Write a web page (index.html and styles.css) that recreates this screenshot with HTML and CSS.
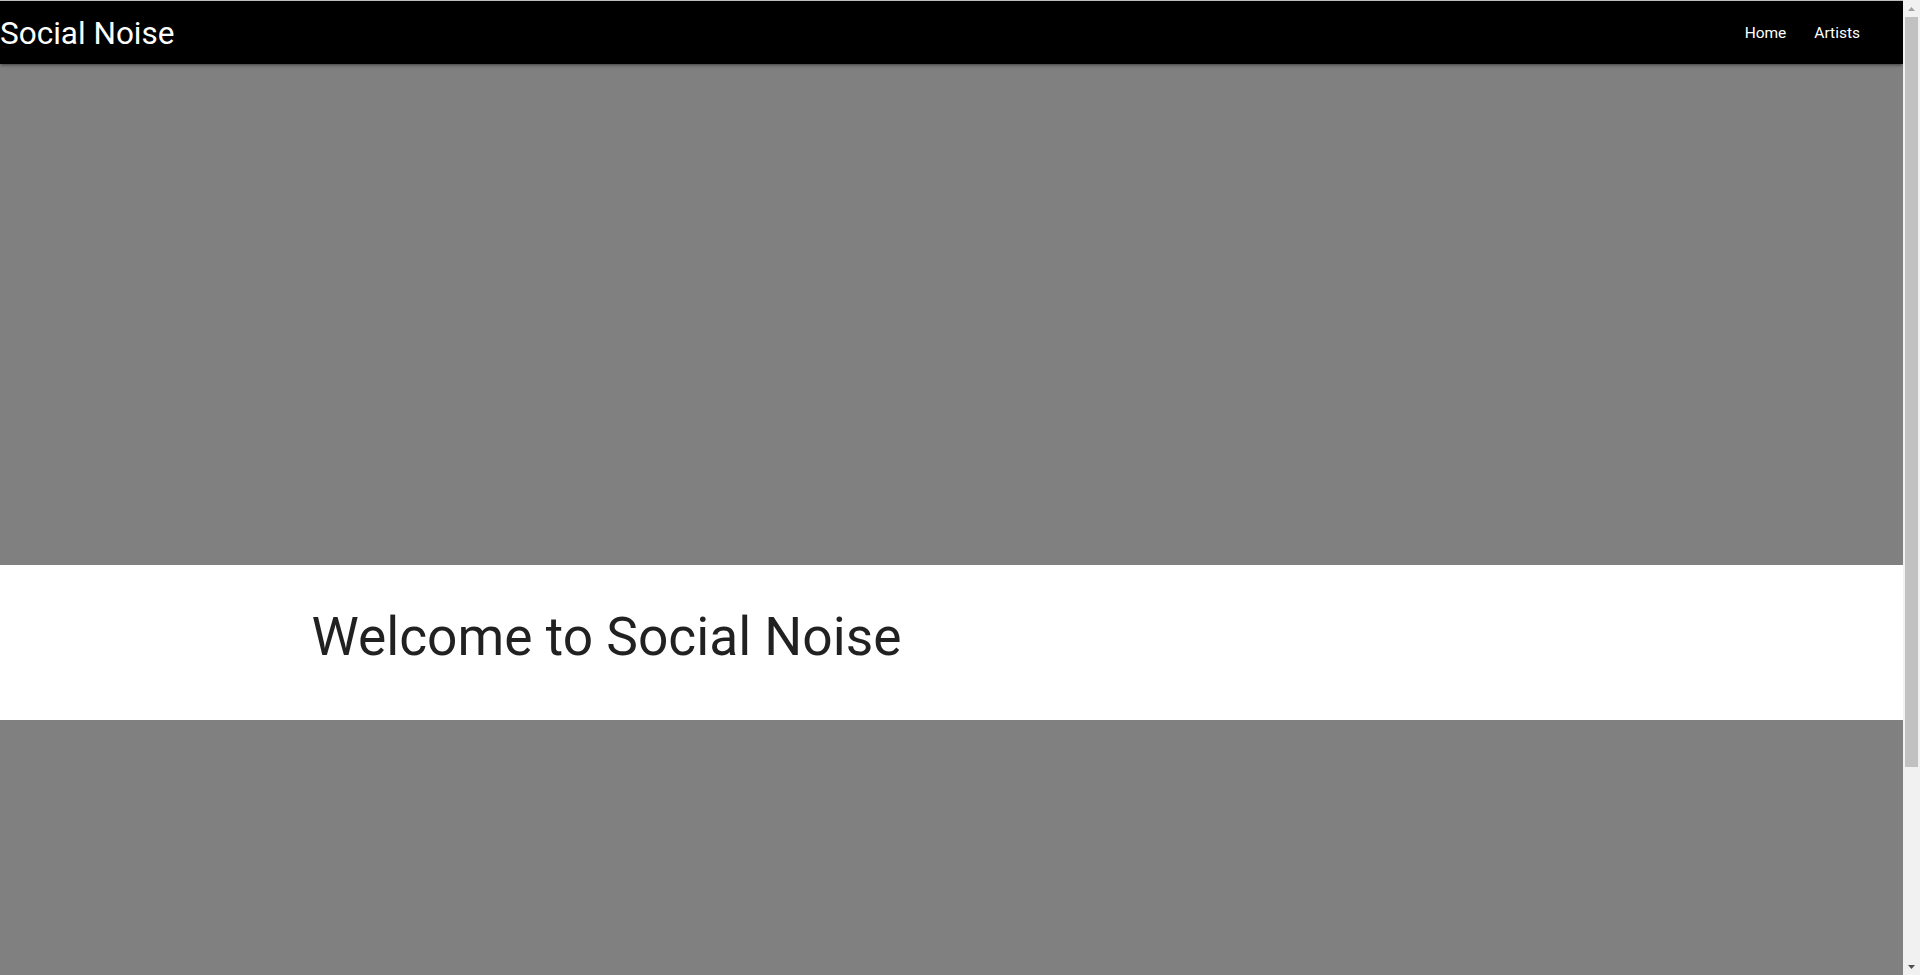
FILE: index.html
```html
<!DOCTYPE html>
<html lang="en">
<head>
<meta charset="utf-8">
<title>Social Noise</title>
<link rel="stylesheet" href="styles.css">
</head>
<body>
<div class="page">
  <nav class="navbar">
    <a class="brand" href="#">Social Noise</a>
    <ul class="nav-links">
      <li><a href="#">Home</a></li>
      <li><a href="#">Artists</a></li>
    </ul>
  </nav>
  <div class="parallax parallax-top"></div>
  <section class="welcome">
    <div class="container">
      <h2 class="welcome-title">Welcome to Social Noise</h2>
    </div>
  </section>
  <div class="parallax parallax-bottom"></div>
</div>
<div class="scrollbar" aria-hidden="true">
  <div class="scroll-btn scroll-up">
    <svg width="7" height="4" viewBox="0 0 7 4"><polygon points="0,4 3.5,0 7,4" fill="#a3a3a3"/></svg>
  </div>
  <div class="scroll-track">
    <div class="scroll-thumb"></div>
  </div>
  <div class="scroll-btn scroll-down">
    <svg width="7" height="4" viewBox="0 0 7 4"><polygon points="0,0 3.5,4 7,0" fill="#505050"/></svg>
  </div>
</div>
</body>
</html>
```

FILE: styles.css
```css
html {
  font-family: Roboto, "Noto Sans", "Liberation Sans", sans-serif;
}
body {
  margin: 0;
  background: #ffffff;
}
.page {
  margin-right: 17px;
}
.navbar {
  position: relative;
  z-index: 2;
  box-sizing: border-box;
  height: 64px;
  border-top: 1px solid #bdbdbd;
  background: #000000;
  display: flex;
  justify-content: space-between;
  align-items: flex-start;
  box-shadow: 0 2px 2px 0 rgba(0,0,0,0.14), 0 3px 1px -2px rgba(0,0,0,0.12), 0 1px 5px 0 rgba(0,0,0,0.2);
}
.brand {
  color: #ffffff;
  text-decoration: none;
  font-size: 31.5px;
  line-height: 60px;
  padding-top: 3px;
}
.nav-links {
  list-style: none;
  margin: 0;
  padding: 1px 29px 0 0;
  display: flex;
}
.nav-links a {
  display: block;
  padding: 0 14px;
  color: #ffffff;
  text-decoration: none;
  font-size: 15.5px;
  line-height: 63px;
}
.parallax {
  background: #808080;
}
.parallax-top {
  height: 501px;
}
.parallax-bottom {
  height: 500px;
}
.welcome {
  height: 155px;
  box-sizing: border-box;
  padding-top: 43px;
}
.container {
  width: 70%;
  max-width: 1280px;
  margin: 0 auto;
}
.welcome-title {
  margin: 0;
  font-size: 53.3px;
  font-weight: 400;
  line-height: 1.1;
  color: rgba(0,0,0,0.87);
}
.scrollbar {
  position: fixed;
  top: 0;
  right: 0;
  bottom: 0;
  width: 17px;
  background: #f1f1f1;
  display: flex;
  flex-direction: column;
  z-index: 5;
}
.scroll-btn {
  height: 17px;
  display: flex;
  align-items: center;
  justify-content: center;
  flex: none;
}
.scroll-track {
  flex: 1;
  padding: 0 2px;
}
.scroll-thumb {
  height: 750px;
  background: #c1c1c1;
}
```
